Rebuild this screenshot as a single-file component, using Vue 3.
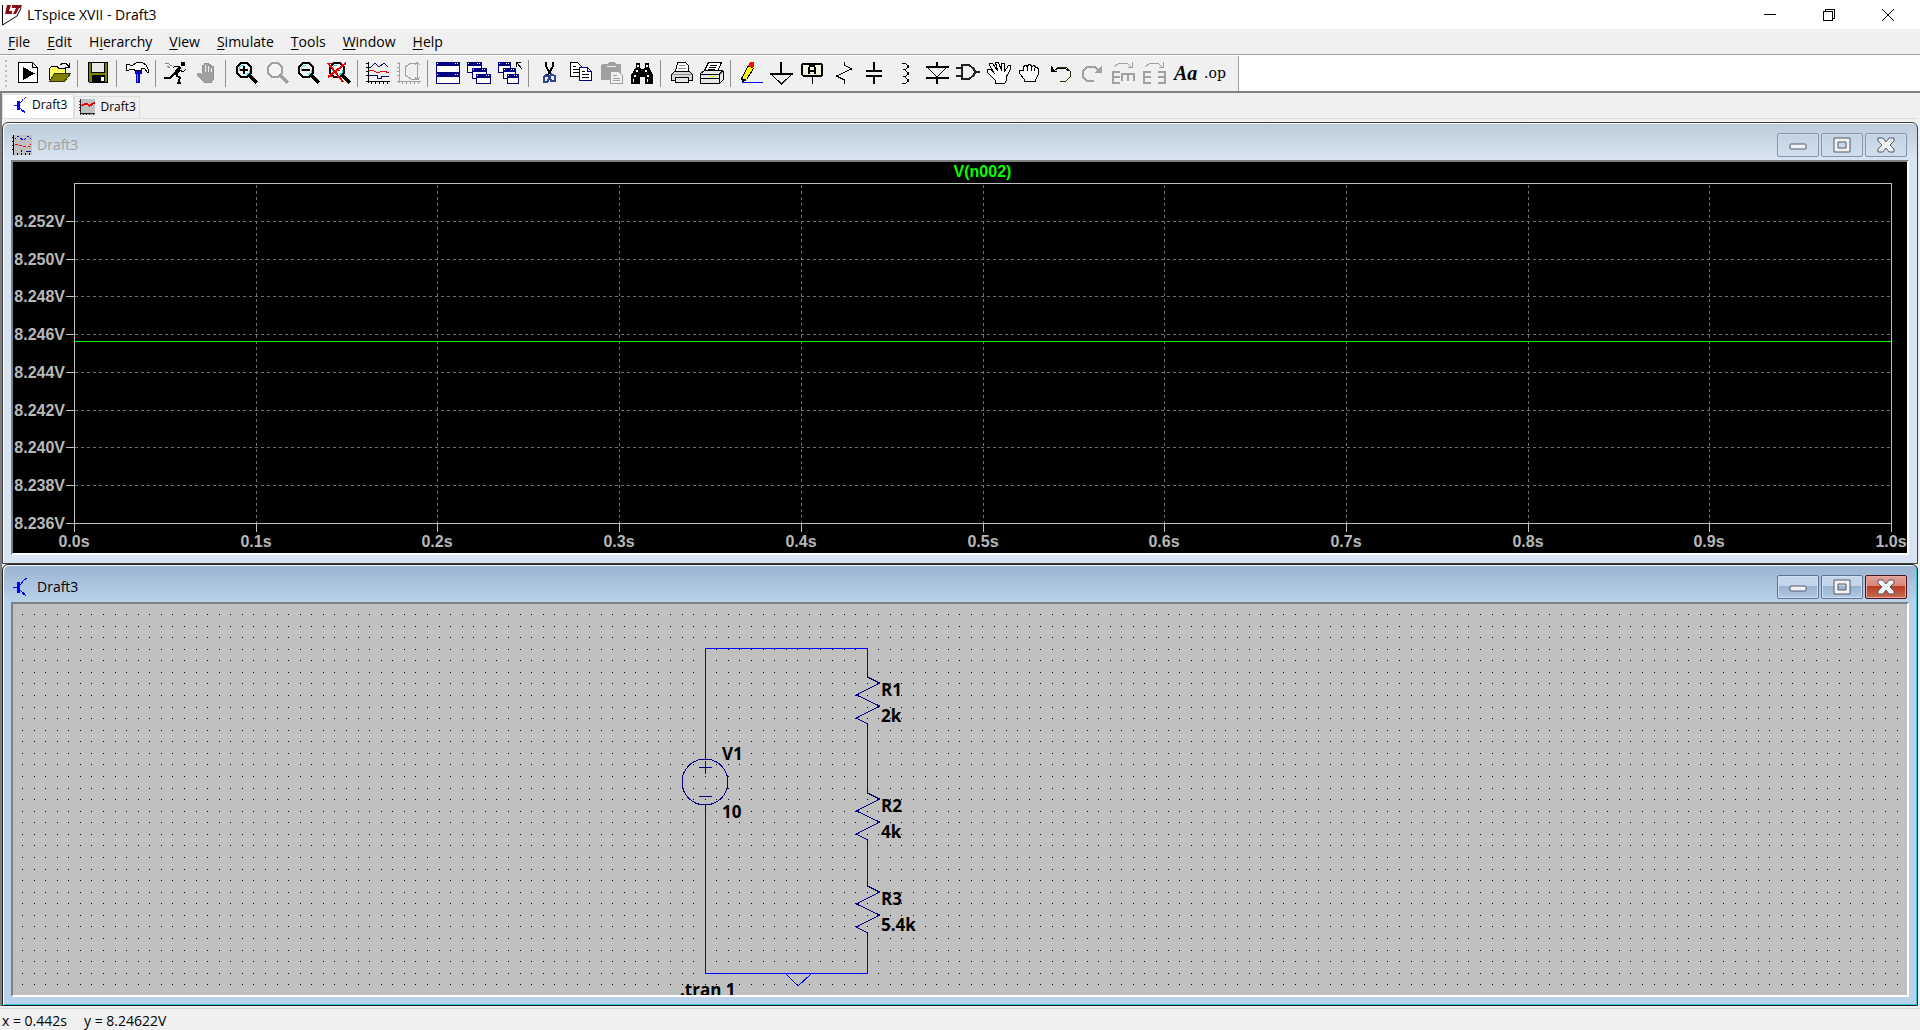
<script setup>
import { ref, computed, onMounted, onBeforeUnmount } from 'vue'

const menus = [
  ['', 'F', 'ile'], ['', 'E', 'dit'], ['H', 'i', 'erarchy'], ['', 'V', 'iew'],
  ['', 'S', 'imulate'], ['', 'T', 'ools'], ['', 'W', 'indow'], ['', 'H', 'elp']
]

// Each shape is [path, fill, stroke, stroke width]; icons sit on a 24 x 24 grid.
const K = '#000'
const W = '#fff'
const G = '#a0a0a0'
const NAVY = '#000080'
const N = 'none'
const lens = c => ['M7 2h6l4 4v6l-4 4H7l-4-4V6z', '#f4f4f4', c, 2]
const grip = c => ['M15 14l8 8', N, c, 3]
const glare = ['M5 10V7l3-3h2M15 9v3l-3 2', N, '#00e8f0', 1]
const win = (x, y, w, h) => [
  [`M${x}.5 ${y}.5h${w - 1}v${h - 1}h-${w - 1}z`, W, NAVY, 1],
  [`M${x} ${y}h${w}v4h-${w}z`, NAVY, N, 0],
  [`M${x + 1} ${y + 1}h1v1h-1zM${x + w - 5} ${y + 1}h1v1h-1zM${x + w - 3} ${y + 1}h1v1h-1z`, W, N, 0]
]
const axes = c => [`M2.5 1v21M0 20.5h24M0 2.5h2M0 6.5h2M0 10.5h2M0 14.5h2M5.5 20v3M9.5 20v3M13.5 20v3M17.5 20v3M21.5 20v3`, N, c, 1]

const groups = [
  [
    { name: 'Run', s: [['M2.5 1.5h14l5 5v15h-19z', W, K, 1], ['M16.5 1.5v5h5', N, K, 1], ['M7 6l12 6.500-12 6.500z', K, N, 0]] },
    { name: 'Open', s: [
      ['M2.5 19V8l2-3h5l2 2h7v6', '#ffff60', K, 1],
      ['M2.500 20.500l5-8h16l-6 8z', '#808000', '#303000', 1],
      ['M13 4l3-2h3l3 4M22.500 2v4.500H18', N, K, 1]] }
  ],
  [{ name: 'Save', s: [
    ['M2.5 1.5h19v20h-18l-1-1z', '#808000', K, 1],
    ['M5.500 1.500h13v10h-13z', '#e8e8e8', K, 1],
    ['M6 14h13v7H6z', K, N, 0], ['M15 16h3v4h-3z', W, N, 0]] }],
  [{ name: 'Control panel', s: [
    ['M1.500 3.500h3l1 1h2l4-3h6l4 3 2 5v2h-1l-3-4h-3v2h-7V8H5L4 9H1.500z', W, K, 1],
    ['M10 10h7v3h-2v9h-4v-9h-1z', '#0000c8', N, 0], ['M12 13h1v8h-1z', '#6080ff', N, 0]] }],
  [
    { name: 'Simulate', s: [
      ['M17 1h4v4h-4z', K, N, 0],
      ['M15 6l-4-1-2 2M16 9l3 2 3-3', N, K, 1],
      ['M17 6l-2-1-4 5-2 3 4 2 3-5z', K, N, 0],
      ['M10 13l-4 4H0M12 14l4 3-2 5h3', N, K, 2],
      ['M1 2h3l2 2 2 1M3 5l3 2', N, '#808080', 1]] },
    { name: 'Halt', s: [
      ['M7 13V4h3V2h3v1h3v2h3v13l-3 4H9l-7-8v-2h3z', G, N, 0],
      ['M10.500 4v7M13.500 3v8M16.500 5v6', N, '#f0f0f0', 1],
      ['M7.500 12V4h2V2h4v2h3v2h2v11l-2 4H9l-7-7', N, '#909090', 1]] }
  ],
  [
    { name: 'Zoom in', s: [lens(K), glare, ['M10 5v8M6 9h8', N, K, 2], grip(K)] },
    { name: 'Zoom area', s: [lens(G), grip(G)] },
    { name: 'Zoom out', s: [lens(K), glare, ['M6 9h8', N, K, 2], grip(K)] },
    { name: 'Zoom full', s: [lens(K), glare, grip(K), ['M1 2l15 19M19 2L1 16', N, '#f00000', 2], ['M1 2h4M1 15.500h5M6 9.500h7', N, '#f00000', 1]] }
  ],
  [
    { name: 'Autorange', s: [
      ['M3 6l2 0 4-4 4 4 5-4 4 4', N, NAVY, 1],
      ['M3 10l3-1 4 2h4l4-1 5 2', N, '#f00000', 1],
      ['M3 14.500h8l1 3h3v-2h8', N, NAVY, 1], axes(K)] },
    { name: 'Smith chart', s: [
      axes(G), ['M22 2h-8L8 6v8l6 4h8M20.500 1v18M18 4l2-3 3 3M18 16l2 3 3-3', N, G, 1]] }
  ],
  [
    { name: 'Tile windows', s: [...win(0, 1, 24, 11), ...win(0, 12, 24, 11)] },
    { name: 'Cascade windows', s: [...win(0, 1, 15, 11), ...win(5, 7, 15, 11), ...win(9, 13, 15, 10)] },
    { name: 'Close windows', s: [...win(0, 1, 13, 11), ...win(5, 7, 13, 11), ...win(9, 13, 12, 10), ['M18.5 6V1.500H23M19 2l5 6', N, K, 1]] }
  ],
  [
    { name: 'Cut', s: [
      ['M9 1v4l4 8M16 1v4l-5 9', N, K, 2],
      ['M9 14l3 2v2l-2 3H7v-5zM14 13l-1 3 1 4h4v-5z', N, '#30408c', 2]] },
    { name: 'Copy', s: [
      ['M2.500 1.500h7l4 4v10h-11z', W, K, 1], ['M5 5.500h3M5 8.500h6M5 11.500h6', N, K, 1],
      ['M11.500 6.500h8l4 4v9h-12z', W, NAVY, 1], ['M19.500 6.500v4h4', N, NAVY, 1], ['M14 10.500h3M14 13.500h7M14 16.500h7', N, K, 1]] },
    { name: 'Paste', s: [
      ['M3 3h5l2-2h5l2 2h5v16H2V4z', G, N, 0], ['M8 5.500h9', N, '#f0f0f0', 1],
      ['M11.500 10.500h8l4 4v8h-12z', '#f0f0f0', G, 1], ['M14 14.500h4M14 17.500h7M14 19.500h7', N, G, 1]] },
    { name: 'Find', s: [
      ['M6 2h4v4l1 2h3l1-2V2h4v4l4 8v9h-8v-7h-5v7H1v-9l5-8z', K, N, 0],
      ['M7 4h2v2H7zM16 4h2v2h-2zM6 9h2v2H6zM15 9h2v2h-2zM4 14h2v2H4zM17 14h2v2h-2zM3 18h1v3H3zM17 18h1v3h-1z', W, N, 0]] }
  ],
  [
    { name: 'Print', s: [
      ['M6.500 10.500l2-9h8l3 3v6', W, K, 1], ['M10 4.500h6M9 7.500h8', N, '#909090', 1],
      ['M2.500 19.500v-6l3-3h15l3 3v6z', '#d8d8d8', K, 1],
      ['M6.500 16.500h13v5h-13z', '#e8e8e8', K, 1], ['M3 13.500h20', N, '#909090', 1]] },
    { name: 'Print setup', s: [
      ['M4.500 9.500l4-8h13l-4 9', W, K, 1], ['M10 4.500h7M9 6.500h7M8 8.500h7', N, K, 1],
      ['M.5 12.500l4-3h18l1 2v7l-4 4H.5z', '#e8e8e8', K, 1],
      ['M1 13.500h18l4-4M19.500 13v9M1 17.500h18', N, K, 1], ['M10 15.500h5', N, '#e8e000', 1]] }
  ],
  [
    { name: 'Wire', s: [
      ['M9.500 4.500l5 3-7 11-4 2-1-3z', '#ffff00', K, 1], ['M2.500 16l4 3-4 2z', K, N, 0],
      ['M9 5l2-4h4v4l-1 2z', '#f01010', N, 0], ['M3 21.500h21', N, '#0000ff', 1]] },
    { name: 'Ground', s: [['M11 1v11M0 13h23', N, K, 2], ['M1 13l10.500 10L22 13', N, K, 1]] },
    { name: 'Label net', s: [
      ['M2 2h19l1 2v10l-2 2H2l-2-2V3z', K, N, 0], ['M2 4h18v10H2z', '#f4f4d8', N, 0],
      ['M8 13V7l1-2h4l1 2v6M8 10h7', N, K, 2], ['M11.500 16v7', N, K, 1]] },
    { name: 'Resistor', s: [['M12.500 1v3l7 4-15 7 8 4v4', N, K, 1]] },
    { name: 'Capacitor', s: [['M11 1v9M11 16v7M3 10h16M3 15h16', N, K, 2]] },
    { name: 'Inductor', s: [['M8 2.500h3l3 2v2l-3 2H9M11 9.500l3 2v2l-3 2H9M11 16.500l3 2v2l-3 2H8', N, K, 1], ['M14 4v3M14 11v3M14 18v3', N, K, 2]] },
    { name: 'Diode', s: [['M12 1v5M12 17v6M1 6h23M1 17h23', N, K, 2], ['M3 7l9 9 9-9', N, K, 1]] },
    { name: 'Component', s: [['M6 4v14h7l5-4 1-3-1-3-5-4zM0 7h6M0 15h6M19 11h5', N, '#202020', 2]] },
    { name: 'Move', s: [
      ['M8.500 22.500v-3L.5 11.500v-3h3l4 4-5-8v-2h3l5 7-2-8h3l3 8V2.500h3v8l4-6h2v4l-4 7v4l-2 3z', W, K, 1]] },
    { name: 'Drag', s: [
      ['M6.500 20.500v-2l-5-6v-3h4v-4l2-1 2 1V4.500l2-1 2 1v1l3-1 1 2h2l1 2v5l-3 5v2z', W, K, 1], ['M9.500 6v4M13.500 6v4M16.500 7v3', N, K, 1]] },
    { name: 'Undo', s: [['M5 10l4-4h8l4 4v6l-4 4h-6', N, '#303000', 1], ['M6 9l3-2h7l4 3', N, K, 1], ['M2 5l1 0 2 4 4 2H2z', K, N, 0]] },
    { name: 'Redo', s: [['M19 10l-4-4H7l-4 4v6l4 4h7', N, G, 2], ['M22 5v7h-8z', G, N, 0]] },
    { name: 'Rotate', s: [
      ['M9 11H2v11h7M2 16h7M11 20v-7h12v7M17 13v7', N, G, 2], ['M3 6l5-4h8l4 4M21.500 1v5h-5', N, G, 1]] },
    { name: 'Mirror', s: [
      ['M9 11H2v11h7M2 16h7M16 11h7v11h-7M23 16h-7', N, G, 2], ['M3 6l5-4h8l4 4M21.500 1v5h-5', N, G, 1]] },
    { name: 'Text', text: 'Aa' },
    { name: 'SPICE directive', text: '.op' }
  ]
]

const transistor = [['M1 10.500h4', N, '#0000ff', 1], ['M5 5h3v11H5z', '#0000ff', N, 0], ['M8 8l4-5 3-2M8 13l6 6', N, '#0000ff', 1], ['M9 16l3-1 2 4-3-1z', '#0000ff', N, 0]]
const waveIcon = [
  ['M2 0h18v20H2z', '#c0c0c0', N, 0],
  ['M1.500 0v20M0 2.500h2M0 6.500h2M0 10.500h2M0 14.500h2M5.500 18v2M9.500 18v2M13.500 18v2M17.500 18v2', N, K, 1]
]
const tabWave = [...waveIcon, ['M2 17.500h18', N, K, 1], ['M3 9l4-3 3 0 3 3 5-4h2', N, '#f00000', 2]]
const titleWave = [...waveIcon,
  ['M3 3.500h1M5 1.500h2M8 3l3 2M12 5l2-2M15 1.500h2M18 3.500h1', N, '#0000ff', 1],
  ['M3 9.500h3M7 10.500h3M11 11.500h3M16 11.500h2M18 9.500h1', N, '#f00000', 1],
  ['M9 17v-2M14 16.500h5', N, NAVY, 1]]

const children = [
  { id: 'wave', icon: titleWave, active: false },
  { id: 'schematic', icon: transistor, active: true }
]

// Waveform pane
const plot = ref(null)
const size = ref({ w: 1895, h: 391 })
let observer
onMounted(() => {
  const el = plot.value[0]
  const read = () => { size.value = { w: el.clientWidth, h: el.clientHeight } }
  read()
  observer = new ResizeObserver(read)
  observer.observe(el)
})
onBeforeUnmount(() => observer && observer.disconnect())

const box = computed(() => ({ l: 61, t: 21, r: size.value.w - 16, b: size.value.h - 30 }))
const xTicks = computed(() => Array.from({ length: 11 }, (_, i) => ({
  x: Math.round(box.value.l + (box.value.r - box.value.l) * i / 10),
  label: (i / 10).toFixed(1) + 's'
})))
const yTicks = computed(() => Array.from({ length: 9 }, (_, i) => ({
  y: Math.round(box.value.b - (box.value.b - box.value.t) * i / 9),
  label: (8.236 + i * 0.002).toFixed(3) + 'V'
})))
const traceY = computed(() => Math.round(box.value.b - (box.value.b - box.value.t) * (8.24564 - 8.236) / 0.018))

// Schematic pane
const PITCH = 81 / 7
const dots = computed(() => {
  let d = ''
  for (let y = 10; y < size.value.h; y += PITCH) {
    for (let x = 9; x < size.value.w; x += PITCH) d += `M${Math.round(x)} ${Math.round(y)}h1v1h-1z`
  }
  return d
})
const resistors = [
  { name: 'R1', value: '2k', y: 73 },
  { name: 'R2', value: '4k', y: 189 },
  { name: 'R3', value: '5.4k', y: 282 }
]
</script>

<template>
  <div class="app">
    <header class="titlebar">
      <svg class="logo" width="22" height="22" viewBox="0 0 22 22" aria-hidden="true">
        <path d="M1.500 1v20L16 12l4-8" fill="none" stroke="#000" />
        <path d="M6 1h4L8 7h3v3H4zM11 1h10l-1 3h-2l-3 6h-3l3-6h-4z" fill="#8c0c14" />
      </svg>
      <h1>LTspice XVII - Draft3</h1>
      <div class="sysbuttons">
        <button aria-label="Minimize"><svg width="12" height="12"><path d="M0 5.500h12" /></svg></button>
        <button aria-label="Restore"><svg width="12" height="12"><path d="M.5 2.500h9v9h-9zM2.500 2V.5h9v9H10" /></svg></button>
        <button aria-label="Close"><svg class="smooth" width="12" height="12"><path d="M0 0l12 12M12 0L0 12" /></svg></button>
      </div>
    </header>

    <nav class="menubar">
      <button v-for="m in menus" :key="m.join('')">{{ m[0] }}<u>{{ m[1] }}</u>{{ m[2] }}</button>
    </nav>

    <div class="toolrow">
      <div class="toolbar" role="toolbar" aria-label="Main toolbar">
        <span class="handle"></span>
        <div v-for="(g, i) in groups" :key="i" class="group">
          <button v-for="t in g" :key="t.name" :aria-label="t.name">
            <span v-if="t.text" :class="t.text === 'Aa' ? 'aa' : 'op'">{{ t.text }}</span>
            <svg v-else width="24" height="24" viewBox="0 0 24 24">
              <path v-for="(p, j) in t.s" :key="j" :d="p[0]" :fill="p[1]" :stroke="p[2]" :stroke-width="p[3]" />
            </svg>
          </button>
        </div>
      </div>
    </div>

    <main class="workspace">
      <div class="tabs">
        <button class="tab current">
          <svg width="16" height="18" viewBox="0 0 16 20"><path v-for="(p, j) in transistor" :key="j" :d="p[0]" :fill="p[1]" :stroke="p[2]" :stroke-width="p[3]" /></svg>
          Draft3
        </button>
        <button class="tab">
          <svg width="16" height="16" viewBox="0 0 20 20"><path v-for="(p, j) in tabWave" :key="j" :d="p[0]" :fill="p[1]" :stroke="p[2]" :stroke-width="p[3]" /></svg>
          Draft3
        </button>
      </div>

      <section v-for="c in children" :key="c.id" class="child" :class="{ active: c.active }">
        <header>
          <svg width="20" height="20" viewBox="0 0 20 20"><path v-for="(p, j) in c.icon" :key="j" :d="p[0]" :fill="p[1]" :stroke="p[2]" :stroke-width="p[3]" /></svg>
          <h2>Draft3</h2>
          <div class="winbuttons">
            <button aria-label="Minimize"><svg class="smooth" width="18" height="18"><rect x="1" y="8" width="16" height="5" rx="1" /></svg></button>
            <button aria-label="Maximize"><svg class="smooth" width="18" height="18"><path fill-rule="evenodd" d="M1 2h16v14H1zM5 6v6h8V6z" /></svg></button>
            <button class="close" aria-label="Close"><svg class="smooth" width="18" height="18"><path d="M1 2h5l3 4 3-4h5v3l-4 4 4 4v3h-5l-3-4-3 4H1v-3l4-4-4-4z" /></svg></button>
          </div>
        </header>

        <div v-if="c.id === 'wave'" ref="plot" class="pane plot">
          <svg width="100%" height="100%">
            <g class="grid">
              <path v-for="t in yTicks.slice(1)" :key="t.y" :d="`M${box.l + 1} ${t.y}.5H${box.r}`" />
              <path v-for="t in xTicks.slice(1, 10)" :key="t.x" :d="`M${t.x}.5 ${box.t + 2}V${box.b}`" />
            </g>
            <g class="axis">
              <path :d="`M${box.l}.5 ${box.t}.5H${box.r}.5V${box.b}.5H${box.l}.5z`" />
              <path v-for="t in yTicks" :key="t.y" :d="`M${box.l - 8} ${t.y}.5h8`" />
              <path v-for="t in xTicks" :key="t.x" :d="`M${t.x}.5 ${box.b}v9`" />
            </g>
            <path class="trace" :d="`M${box.l} ${traceY}.5H${box.r}`" />
            <text v-for="t in yTicks" :key="t.label" :x="box.l - 9" :y="t.y + 6" text-anchor="end">{{ t.label }}</text>
            <text v-for="t in xTicks" :key="t.label" :x="t.x" :y="box.b + 24" text-anchor="middle">{{ t.label }}</text>
            <text class="legend" :x="(box.l + box.r) / 2" y="15" text-anchor="middle">V(n002)</text>
          </svg>
        </div>

        <div v-else class="pane schematic">
          <svg width="100%" height="100%">
            <path :d="dots" fill="#000" />
            <g class="wire">
              <path d="M692.500 153V44.500h162V68M854.500 125v59M854.500 241v36M854.500 334v35.500h-162V207" />
              <path d="M773 370l12 12 13-12" />
            </g>
            <g class="part">
              <path d="M692.500 150v5M692.500 201v6M686 163.500h13M692.500 157v13M686 192.500h13" />
              <circle cx="692" cy="178" r="23" />
              <path v-for="r in resistors" :key="r.name" :d="`M854.500 ${r.y - 5}v5l12 6-23 12 23 11-23 12 11 6v5`" />
            </g>
            <text x="709" y="156">V1</text>
            <text x="709" y="214">10</text>
            <template v-for="r in resistors" :key="r.name">
              <text x="868" :y="r.y + 19">{{ r.name }}</text>
              <text x="868" :y="r.y + 45">{{ r.value }}</text>
            </template>
            <text x="667" y="392">.tran 1</text>
          </svg>
        </div>
      </section>
    </main>

    <footer class="status"><span>x = 0.442s</span><span>y = 8.24622V</span></footer>
  </div>
</template>

<style>
body { margin: 0; background: #f0f0f0; }
</style>

<style scoped>
.app {
  display: flex;
  flex-direction: column;
  min-height: 100vh;
  font: 14px/20px "Open Sans", "Noto Sans", sans-serif;
  color: #000;
}
button { font: inherit; color: inherit; background: none; border: 0; padding: 0; margin: 0; }
h1, h2 { font: inherit; margin: 0; }
svg { display: block; flex: none; shape-rendering: crispEdges; }
svg.smooth, .logo { shape-rendering: auto; }

.titlebar { display: flex; align-items: center; height: 29px; background: #fff; padding: 0 3px 0 1px; }
.titlebar h1 { margin-left: 4px; flex: 1; }
.sysbuttons { display: flex; }
.sysbuttons button { width: 59px; height: 28px; display: grid; place-items: center; }
.sysbuttons path { fill: none; stroke: #000; }

.menubar { display: flex; gap: 17px; height: 25px; padding-left: 8px; border-bottom: 1px solid #a0a0a0; background: #f0f0f0; }
.menubar u { text-underline-offset: 2px; }
.menubar button { height: 25px; }

.toolrow { background: #fff; border-bottom: 2px solid #808080; padding-top: 1px; }
.toolbar { display: flex; width: max-content; height: 35px; background: #f0f0f0; padding-right: 7px; border-right: 1px solid #a0a0a0; }
.handle { width: 2px; height: 28px; margin: 4px 5px; background: repeating-linear-gradient(#bbb 0 2px, transparent 2px 5px); }
.group { display: flex; }
.group + .group { padding-left: 4px; margin-left: 3px; border-left: 1px solid #909090; border-image: linear-gradient(transparent 5px, #909090 5px 30px, transparent 30px) 1; }
.group button { width: 31px; height: 35px; padding: 0 0 2px 4px; display: flex; align-items: center; }
.aa { font: italic bold 20px/24px "Liberation Serif", serif; margin-left: 1px; }
.op { font: 14px/20px "DejaVu Serif", serif; }

.workspace { flex: 1; display: flex; flex-direction: column; border-left: 2px solid #808080; padding-right: 2px; }
.tabs { display: flex; align-items: flex-end; height: 25px; margin-bottom: 3px; border-bottom: 1px solid #dcdcdc; }
.tab { display: flex; align-items: center; gap: 5px; height: 22px; padding: 0 3px 2px 4px; font-size: 12px; border: 1px solid #dcdcdc; border-bottom: 0; }
.tab.current { height: 24px; background: #fff; padding: 0 6px 4px 9px; gap: 4px; }

.child {
  flex: 1;
  display: flex;
  flex-direction: column;
  border: 1px solid #404040;
  border-radius: 6px 6px 0 0;
  padding: 0 8px;
  padding-bottom: 8px;
  background: linear-gradient(#bdcbd9, #d8e4f1 36px);
  box-shadow: inset 1px 1px #fff;
}
.child.active {
  background: linear-gradient(#99b4d1, #b9d1ea 36px);
  border-color: #202020;
  box-shadow: inset 1px 1px #fff, inset -1px -1px #30c8dc;
}
.child > header { display: flex; align-items: center; gap: 5px; height: 37px; padding: 6px 0 0 1px; box-sizing: border-box; color: #a0a0a0; }
.child.active > header { color: #000; }
.child h2 { flex: 1; }
.winbuttons { display: flex; gap: 2px; padding-right: 2px; }
.winbuttons button {
  width: 42px; height: 24px; display: grid; place-items: center;
  border: 1px solid #8593af; border-radius: 2px;
  background: linear-gradient(#c3d2e1, #d0deec);
  box-shadow: inset 0 0 0 1px #d0deec;
}
.winbuttons svg { fill: #f2f2f2; stroke: #50586c; }
.active .winbuttons button {
  border-color: #5f7394;
  background: linear-gradient(#c4d6ea 45%, #98b0cf 45%, #b4cbe4);
  box-shadow: inset 0 0 0 1px #cfe0f2;
}
.active .winbuttons .close {
  border-color: #4c1420;
  background: linear-gradient(#e0a298 0, #d88676 45%, #b83a20 45%, #cc6a50);
  box-shadow: inset 0 0 0 1px #e8a89c;
}
.pane { flex: 1; min-height: 0; border: 2px solid #808080; border-right-color: #fff; border-bottom-color: #fff; position: relative; }
.pane > svg { position: absolute; inset: 0; }
.plot { background: #000; }
.schematic { background: #c0c0c0; }

.grid path { stroke: #707070; stroke-dasharray: 3 3; }
.axis path { stroke: #c0c0c0; fill: none; }
.trace { stroke: #00ff00; }
.plot text { font: bold 16px "Liberation Sans", Arial, sans-serif; fill: #b8b8b8; }
.plot .legend { fill: #00ff00; }

.wire path { stroke: #0000ff; fill: none; }
.part path, .part circle { stroke: #000080; fill: none; }
.schematic text { font: bold 17px "Open Sans", "Noto Sans", sans-serif; fill: #000; }

.status { display: flex; align-items: center; gap: 17px; height: 18px; padding: 3px 2px 0; margin-top: 2px; border-top: 1px solid #d8d8d8; background: #f0f0f0; }
</style>
